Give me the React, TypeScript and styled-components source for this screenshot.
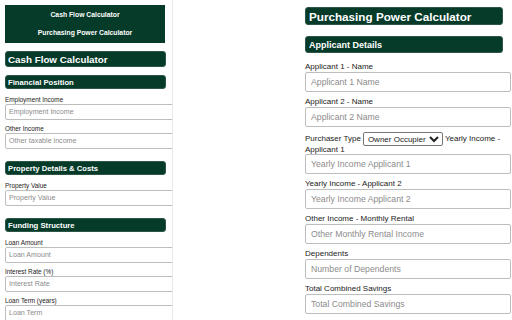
import * as React from 'react';
import styled, { createGlobalStyle, css } from 'styled-components';

const GREEN = '#063b2a';

const GlobalStyle = createGlobalStyle`
  body {
    margin: 0;
    background: #fff;
    font-family: "Liberation Sans", Arial, sans-serif;
    overflow: hidden;
  }
`;

const Page = styled.div`
  display: flex;
  height: 320px;
`;

const Sidebar = styled.aside`
  width: 173px;
  flex-shrink: 0;
  box-sizing: border-box;
  padding: 5px 0 0 5px;
  border-right: 1px solid #e8e8e8;
  overflow: hidden;
`;

const Nav = styled.nav`
  width: 160px;
  padding: 1px 0;
  background: ${GREEN};
`;

const NavLink = styled.a`
  display: block;
  text-align: center;
  line-height: 18px;
  font-size: 6.8px;
  font-weight: bold;
  color: #fff;
  text-decoration: none;
`;

const banner = css`
  box-sizing: border-box;
  margin: 0;
  display: flex;
  align-items: center;
  background: ${GREEN};
  border: 1px solid #2c5646;
  border-radius: 3px;
  color: #fff;
  font-weight: bold;
  white-space: nowrap;
`;

const SideTitle = styled.h1`
  ${banner};
  width: 161px;
  height: 16px;
  margin-top: 8px;
  padding-left: 2px;
  font-size: 9.8px;
`;

const SideSection = styled.h2<{ $gap: number }>`
  ${banner};
  width: 161px;
  height: 14px;
  margin-top: ${p => p.$gap}px;
  margin-bottom: 7px;
  padding-left: 2px;
  font-size: 7.7px;
`;

const SideField = styled.div`
  margin-bottom: 5px;
`;

const SideLabel = styled.label`
  display: block;
  line-height: 8px;
  font-size: 6.4px;
  color: #222;
`;

const SideInput = styled.input`
  display: block;
  box-sizing: border-box;
  width: 180px;
  height: 16px;
  padding: 0 3px;
  border: 1px solid #bdbdbd;
  border-radius: 2px;
  font-family: inherit;
  font-size: 7.1px;
  outline: none;
  &::placeholder {
    color: #8c8c8c;
  }
`;

const Main = styled.main`
  flex: 1;
  display: flex;
  justify-content: flex-end;
  padding: 7px 1px 0 0;
`;

const Panel = styled.section`
  width: 206px;
`;

const MainTitle = styled.h1`
  ${banner};
  width: 198px;
  height: 18px;
  padding-left: 3px;
  font-size: 11.7px;
`;

const MainSection = styled.h2`
  ${banner};
  width: 198px;
  height: 17px;
  margin-top: 11px;
  margin-bottom: 9px;
  padding-left: 3px;
  font-size: 9px;
`;

const MainField = styled.div`
  margin-bottom: 5px;
  font-size: 8px;
  line-height: 10px;
  color: #222;
`;

const InlineRow = styled(MainField)`
  line-height: 8px;
`;

const MainLabel = styled.label`
  display: block;
`;

const MainInput = styled.input`
  display: block;
  box-sizing: border-box;
  width: 206px;
  height: 20px;
  padding: 0 5px;
  border: 1px solid #bdbdbd;
  border-radius: 2px;
  font-family: inherit;
  font-size: 8.7px;
  outline: none;
  &::placeholder {
    color: #8c8c8c;
  }
`;

const Select = styled.select`
  box-sizing: border-box;
  height: 14px;
  margin: 0 2px;
  padding: 0;
  vertical-align: middle;
  border: 1px solid #767676;
  border-radius: 2px;
  background: #fff;
  font-family: inherit;
  font-size: 8px;
  color: #222;
`;

const sideGroups = [
  {
    title: 'Financial Position',
    fields: [
      ['Employment Income', 'Employment Income'],
      ['Other Income', 'Other taxable income'],
    ],
  },
  {
    title: 'Property Details & Costs',
    fields: [['Property Value', 'Property Value']],
  },
  {
    title: 'Funding Structure',
    fields: [
      ['Loan Amount', 'Loan Amount'],
      ['Interest Rate (%)', 'Interest Rate'],
      ['Loan Term (years)', 'Loan Term'],
    ],
  },
];

const lowerFields = [
  ['Yearly Income - Applicant 2', 'Yearly Income Applicant 2'],
  ['Other Income - Monthly Rental', 'Other Monthly Rental Income'],
  ['Dependents', 'Number of Dependents'],
  ['Total Combined Savings', 'Total Combined Savings'],
];

const App: React.FC = () => {
  return (
    <Page>
      <GlobalStyle />
      <Sidebar>
        <Nav>
          <NavLink href="#cash-flow">Cash Flow Calculator</NavLink>
          <NavLink href="#purchasing-power">Purchasing Power Calculator</NavLink>
        </Nav>
        <SideTitle>Cash Flow Calculator</SideTitle>
        {sideGroups.map((group, i) => (
          <React.Fragment key={group.title}>
            {/* sibling margins collapse, so the gap after a field is set here */}
            <SideSection $gap={i === 0 ? 8 : 12}>{group.title}</SideSection>
            {group.fields.map(([label, placeholder]) => (
              <SideField key={label}>
                <SideLabel>{label}</SideLabel>
                <SideInput placeholder={placeholder} />
              </SideField>
            ))}
          </React.Fragment>
        ))}
      </Sidebar>
      <Main>
        <Panel>
          <MainTitle>Purchasing Power Calculator</MainTitle>
          <MainSection>Applicant Details</MainSection>
          <MainField>
            <MainLabel>Applicant 1 - Name</MainLabel>
            <MainInput placeholder="Applicant 1 Name" />
          </MainField>
          <MainField>
            <MainLabel>Applicant 2 - Name</MainLabel>
            <MainInput placeholder="Applicant 2 Name" />
          </MainField>
          <InlineRow>
            Purchaser Type
            <Select defaultValue="owner">
              <option value="owner">Owner Occupier</option>
              <option value="investor">Investor</option>
            </Select>
            Yearly Income - Applicant 1
            <MainInput placeholder="Yearly Income Applicant 1" />
          </InlineRow>
          {lowerFields.map(([label, placeholder]) => (
            <MainField key={label}>
              <MainLabel>{label}</MainLabel>
              <MainInput placeholder={placeholder} />
            </MainField>
          ))}
        </Panel>
      </Main>
    </Page>
  );
};

export default App;
